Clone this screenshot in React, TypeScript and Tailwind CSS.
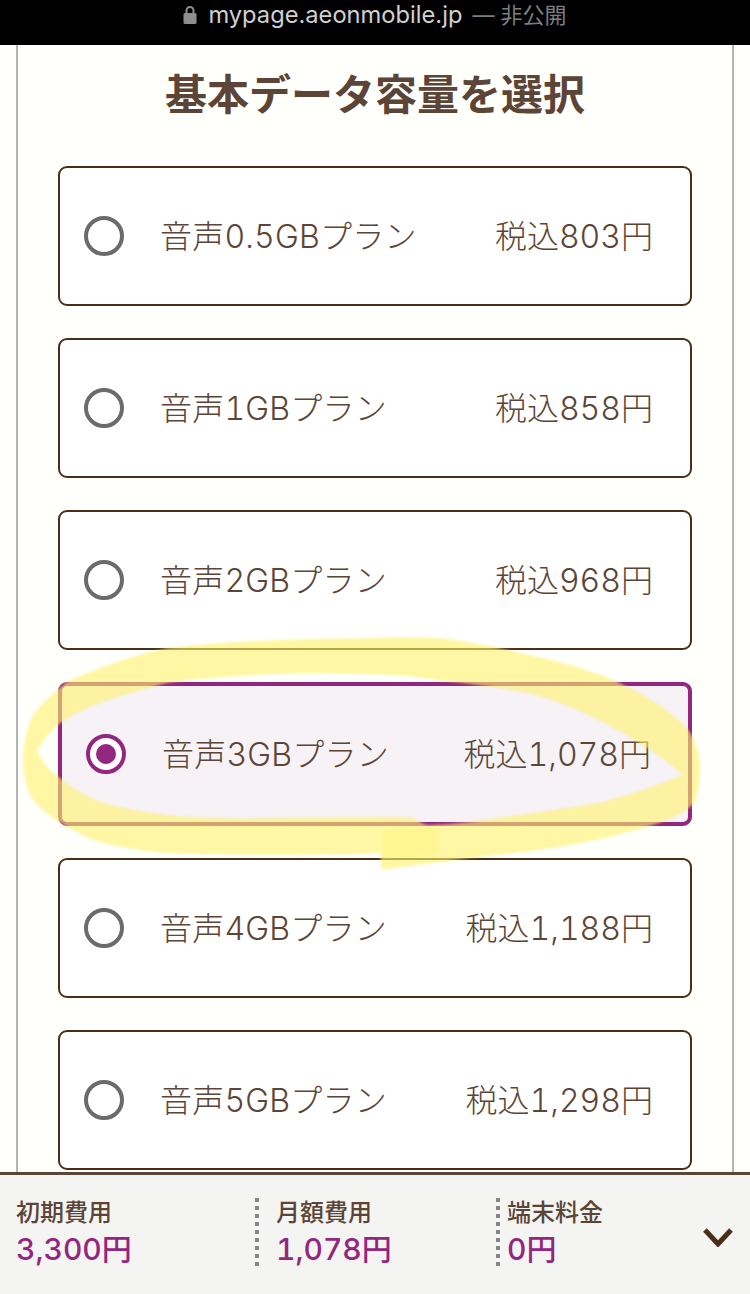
const plans = [
  { name: '音声0.5GBプラン', price: '税込803円' },
  { name: '音声1GBプラン', price: '税込858円' },
  { name: '音声2GBプラン', price: '税込968円' },
  { name: '音声3GBプラン', price: '税込1,078円', selected: true },
  { name: '音声4GBプラン', price: '税込1,188円' },
  { name: '音声5GBプラン', price: '税込1,298円' },
];

const costs = [
  { label: '初期費用', value: '3,300円', width: 'w-[255px]', pad: 'pl-[16px]' },
  { label: '月額費用', value: '1,078円', width: 'w-[241px]', pad: 'pl-[17px]' },
  { label: '端末料金', value: '0円', width: 'w-[206px]', pad: 'pl-[7px]' },
];

function PlanCard({ name, price, selected }: { name: string; price: string; selected?: boolean }) {
  return (
    <div
      className={
        selected
          ? 'flex h-[144px] items-center rounded-[9px] border-[4px] border-[#93267f] bg-[#f6f2f6] pl-[24px] pr-[37px]'
          : 'flex h-[140px] items-center rounded-[9px] border-2 border-[#4a2e1a] bg-white pl-[24px] pr-[37px]'
      }
    >
      {selected ? (
        <span className="flex h-[40px] w-[40px] shrink-0 items-center justify-center rounded-full border-[4px] border-[#93267f] bg-white">
          <span className="h-[20px] w-[20px] rounded-full bg-[#93267f]" />
        </span>
      ) : (
        <span className="h-[40px] w-[40px] shrink-0 rounded-full border-[4px] border-[#6b6b6b] bg-white" />
      )}
      <span className="ml-[36px] pt-[1px] text-[32px] font-light leading-none tracking-[0.2px] text-[#5c4536] tabular-nums">{name}</span>
      <span className="ml-auto pt-[1px] text-[32px] font-light leading-none text-[#5c4536] tabular-nums">{price}</span>
    </div>
  );
}

export default function App() {
  return (
    <div className="relative flex h-[1294px] w-[750px] flex-col overflow-hidden bg-[#fffffb] font-['Inter','Noto_Sans_CJK_JP',sans-serif]">
      <div className="flex h-[45px] shrink-0 items-start justify-center bg-black pt-[3px]">
        <svg width="14" height="19" viewBox="0 0 14 19" className="mr-[11px] mt-[2px]">
          <path d="M3.5 9V5.5a3.5 3.5 0 0 1 7 0V9" fill="none" stroke="#8e8e8e" strokeWidth="2" />
          <rect x="0.5" y="8" width="13" height="11" rx="1.5" fill="#8e8e8e" />
        </svg>
        <span className="text-[23.7px] leading-[24px] text-[#d0d0d0]">mypage.aeonmobile.jp</span>
        <span className="ml-[10px] text-[22px] leading-[24px] text-[#7e7e7e]">— 非公開</span>
      </div>

      <main className="mx-[16px] min-h-0 flex-1 overflow-hidden border-x-2 border-[#b4b4b4] px-[40px]">
        <h1 className="pt-[25px] text-center text-[42px] font-bold leading-[50px] text-[#5c4536]">基本データ容量を選択</h1>
        <div className="mt-[46px] flex flex-col gap-[32px]">
          {plans.map((plan) => (
            <PlanCard key={plan.name} {...plan} />
          ))}
        </div>
      </main>

      <footer className="flex h-[122px] shrink-0 items-start border-t-[3px] border-[#5c4536] bg-[#f4f4f2] pt-[23px]">
        {costs.map((cost, i) => (
          <div key={cost.label} className={`${cost.width} flex h-[72px] shrink-0`}>
            {i > 0 && (
              <span className="h-full w-[4px] shrink-0 bg-[repeating-linear-gradient(to_bottom,#858585_0,#858585_4px,transparent_4px,transparent_8px)]" />
            )}
            <div className={cost.pad}>
              <div className="text-[24px] font-medium leading-[30px] text-[#5c4536]">{cost.label}</div>
              <div className="mt-[5px] text-[30px] font-medium leading-[32px] text-[#93267f] tabular-nums">{cost.value}</div>
            </div>
          </div>
        ))}
        <svg width="32" height="20" viewBox="0 0 32 20" className="mt-[29px]">
          <path d="M3 3l13 14L29 3" fill="none" stroke="#4a2e1a" strokeWidth="5" />
        </svg>
      </footer>

      {/* highlighter stroke over the selected plan */}
      <svg width="750" height="1294" className="pointer-events-none absolute inset-0 blur-[1px]">
        <path
          fillRule="evenodd"
          fill="#fff26b"
          fillOpacity="0.61"
          d="M370 638C392 637 415 637 437 638C460 640 482 644 503 649C526 654 548 659 570 665C594 672 616 680 637 692C656 702 673 714 687 728C695 739 699 752 700 765C700 778 699 790 695 802C685 813 670 820 653 825C626 833 598 840 570 845C537 851 503 854 470 858C440 862 410 866 382 870L380 853C310 855 236 855 167 853C144 851 122 848 100 842C85 837 72 830 60 822C47 815 37 806 30 795C25 783 23 771 23 758C24 743 27 728 33 715C42 704 54 692 67 682C97 668 132 656 167 648C234 640 302 639 370 638Z M37 750C43 765 51 771 60 778C72 788 86 796 100 802C122 808 144 812 167 815C200 818 234 819 267 818C305 818 343 817 380 817C392 817 403 817 413 818C420 822 424 825 430 825C455 824 480 821 503 817C538 813 571 808 603 802C630 795 657 785 683 775C660 754 632 738 603 722C582 711 560 702 537 695C505 688 471 684 437 680C415 676 392 674 370 674C335 673 300 673 267 674C233 676 199 678 167 683C144 689 122 695 100 703C86 708 72 715 60 723C51 731 43 740 37 750Z"
        />
        <path d="M383 830L437 827L437 854L383 858Z" fill="#fff26b" fillOpacity="0.3" />
      </svg>
    </div>
  );
}
